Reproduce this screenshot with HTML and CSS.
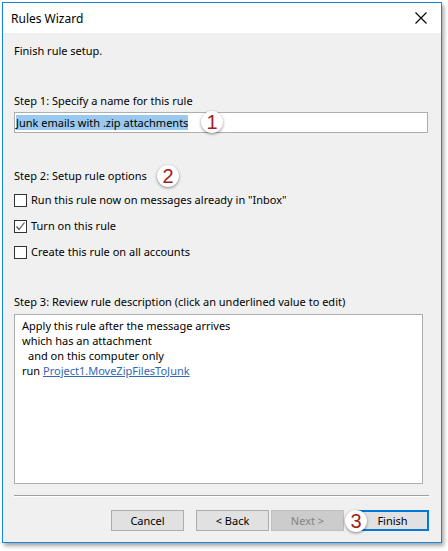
FILE: index.html
```html
<!DOCTYPE html>
<html>
<head>
<meta charset="utf-8">
<link rel="stylesheet" href="styles.css">
</head>
<body>
<div class="window">
  <div class="titlebar">
    <span class="title">Rules Wizard</span>
    <svg class="close" width="12" height="12" viewBox="0 0 12 12"><path d="M0.5 0.5 L11.5 11.5 M11.5 0.5 L0.5 11.5" stroke="#000" stroke-width="1.1"/></svg>
  </div>
  <div class="content">
    <div class="heading">Finish rule setup.</div>
    <div class="label step1">Step 1: Specify a name for this rule</div>
    <div class="input"><span class="sel">Junk emails with .zip attachments</span></div>
    <div class="label step2">Step 2: Setup rule options</div>
    <div class="checks">
      <div class="check"><span class="box"></span>Run this rule now on messages already in "Inbox"</div>
      <div class="check"><span class="box"><svg width="11" height="11" viewBox="0 0 11 11"><path d="M1.5 5.5 L4 8.5 L9.5 1.5" fill="none" stroke="#555" stroke-width="1.2"/></svg></span>Turn on this rule</div>
      <div class="check"><span class="box"></span>Create this rule on all accounts</div>
    </div>
    <div class="label step3">Step 3: Review rule description (click an underlined value to edit)</div>
    <div class="desc">
      <div>Apply this rule after the message arrives</div>
      <div>which has an attachment</div>
      <div class="indent">and on this computer only</div>
      <div>run <span class="link">Project1.MoveZipFilesToJunk</span></div>
    </div>
    <div class="sep"></div>
    <div class="buttons">
      <div class="btn">Cancel</div>
      <div class="btn back">&lt; Back</div>
      <div class="btn disabled">Next &gt;</div>
      <div class="btn primary">Finish</div>
    </div>
  </div>
  <div class="num n1">1</div>
  <div class="num n2">2</div>
  <div class="num n3">3</div>
</div>
</body>
</html>
```
FILE: styles.css
```css
html, body {
  margin: 0;
  padding: 0;
  background: #ffffff;
}
body {
  width: 448px;
  height: 551px;
  overflow: hidden;
  font-family: "Noto Sans", "Open Sans", sans-serif;
  font-size: 11px;
  color: #000;
}
.window {
  position: relative;
  margin: 2px 0 0 2px;
  width: 438px;
  height: 539px;
  border: 1px solid #1883d7;
  background: #f0f0f0;
  box-shadow: 2px 3px 4px rgba(0,0,0,0.35);
  display: flex;
  flex-direction: column;
}
.titlebar {
  height: 30px;
  background: #ffffff;
  display: flex;
  align-items: center;
  justify-content: space-between;
  padding: 0 14px 0 8px;
}
.title {
  font-size: 12px;
  color: #000;
}
.content {
  flex: 1;
  padding: 0 11px;
  display: flex;
  flex-direction: column;
}
.heading {
  margin-top: 10px;
  line-height: 16px;
}
.label {
  line-height: 16px;
}
.step1 { margin-top: 34px; }
.input {
  margin-top: 3px;
  height: 19px;
  width: 411px;
  border: 1px solid #adadad;
  background: #fff;
  display: flex;
  align-items: center;
  padding-left: 1px;
}
.sel {
  background: #99c9ef;
  line-height: 15px;
}
.step2 { margin-top: 35px; }
.checks {
  margin-top: 8px;
  display: flex;
  flex-direction: column;
  gap: 10px;
}
.check {
  display: flex;
  align-items: center;
  height: 16px;
  line-height: 16px;
}
.box {
  width: 11px;
  height: 11px;
  border: 1px solid #333;
  background: #fff;
  margin-right: 4px;
  display: flex;
  align-items: center;
  justify-content: center;
}
.step3 { margin-top: 34px; }
.desc {
  margin-top: 4px;
  width: 400px;
  height: 165px;
  border: 1px solid #adadad;
  background: #fff;
  padding: 3px 0 0 7px;
  line-height: 15px;
}
.indent { padding-left: 6px; }
.link {
  color: #3367b4;
  text-decoration: underline;
}
.sep {
  margin-top: 11px;
  height: 1px;
  width: 415px;
  background: #a0a0a0;
  border-bottom: 1px solid #fff;
}
.buttons {
  margin-top: 13px;
  display: flex;
  gap: 12px;
  padding-left: 97px;
}
.btn {
  width: 71px;
  height: 19px;
  border: 1px solid #adadad;
  background: #e1e1e1;
  display: flex;
  align-items: center;
  justify-content: center;
}
.back { margin-right: -10px; }
.disabled {
  background: #cccccc;
  border-color: #bfbfbf;
  color: #838383;
}
.primary {
  width: 69px;
  height: 17px;
  border: 2px solid #0078d7;
}
.num {
  position: absolute;
  width: 22px;
  height: 22px;
  border-radius: 50%;
  background: #fff;
  box-shadow: 0 1px 3px rgba(0,0,0,0.45);
  color: #a11d1d;
  font-family: "Liberation Sans", sans-serif;
  font-size: 20px;
  line-height: 22px;
  text-align: center;
}
.n1 { left: 198px; top: 108px; }
.n2 { left: 154px; top: 162px; }
.n3 { left: 342px; top: 507px; }
```
